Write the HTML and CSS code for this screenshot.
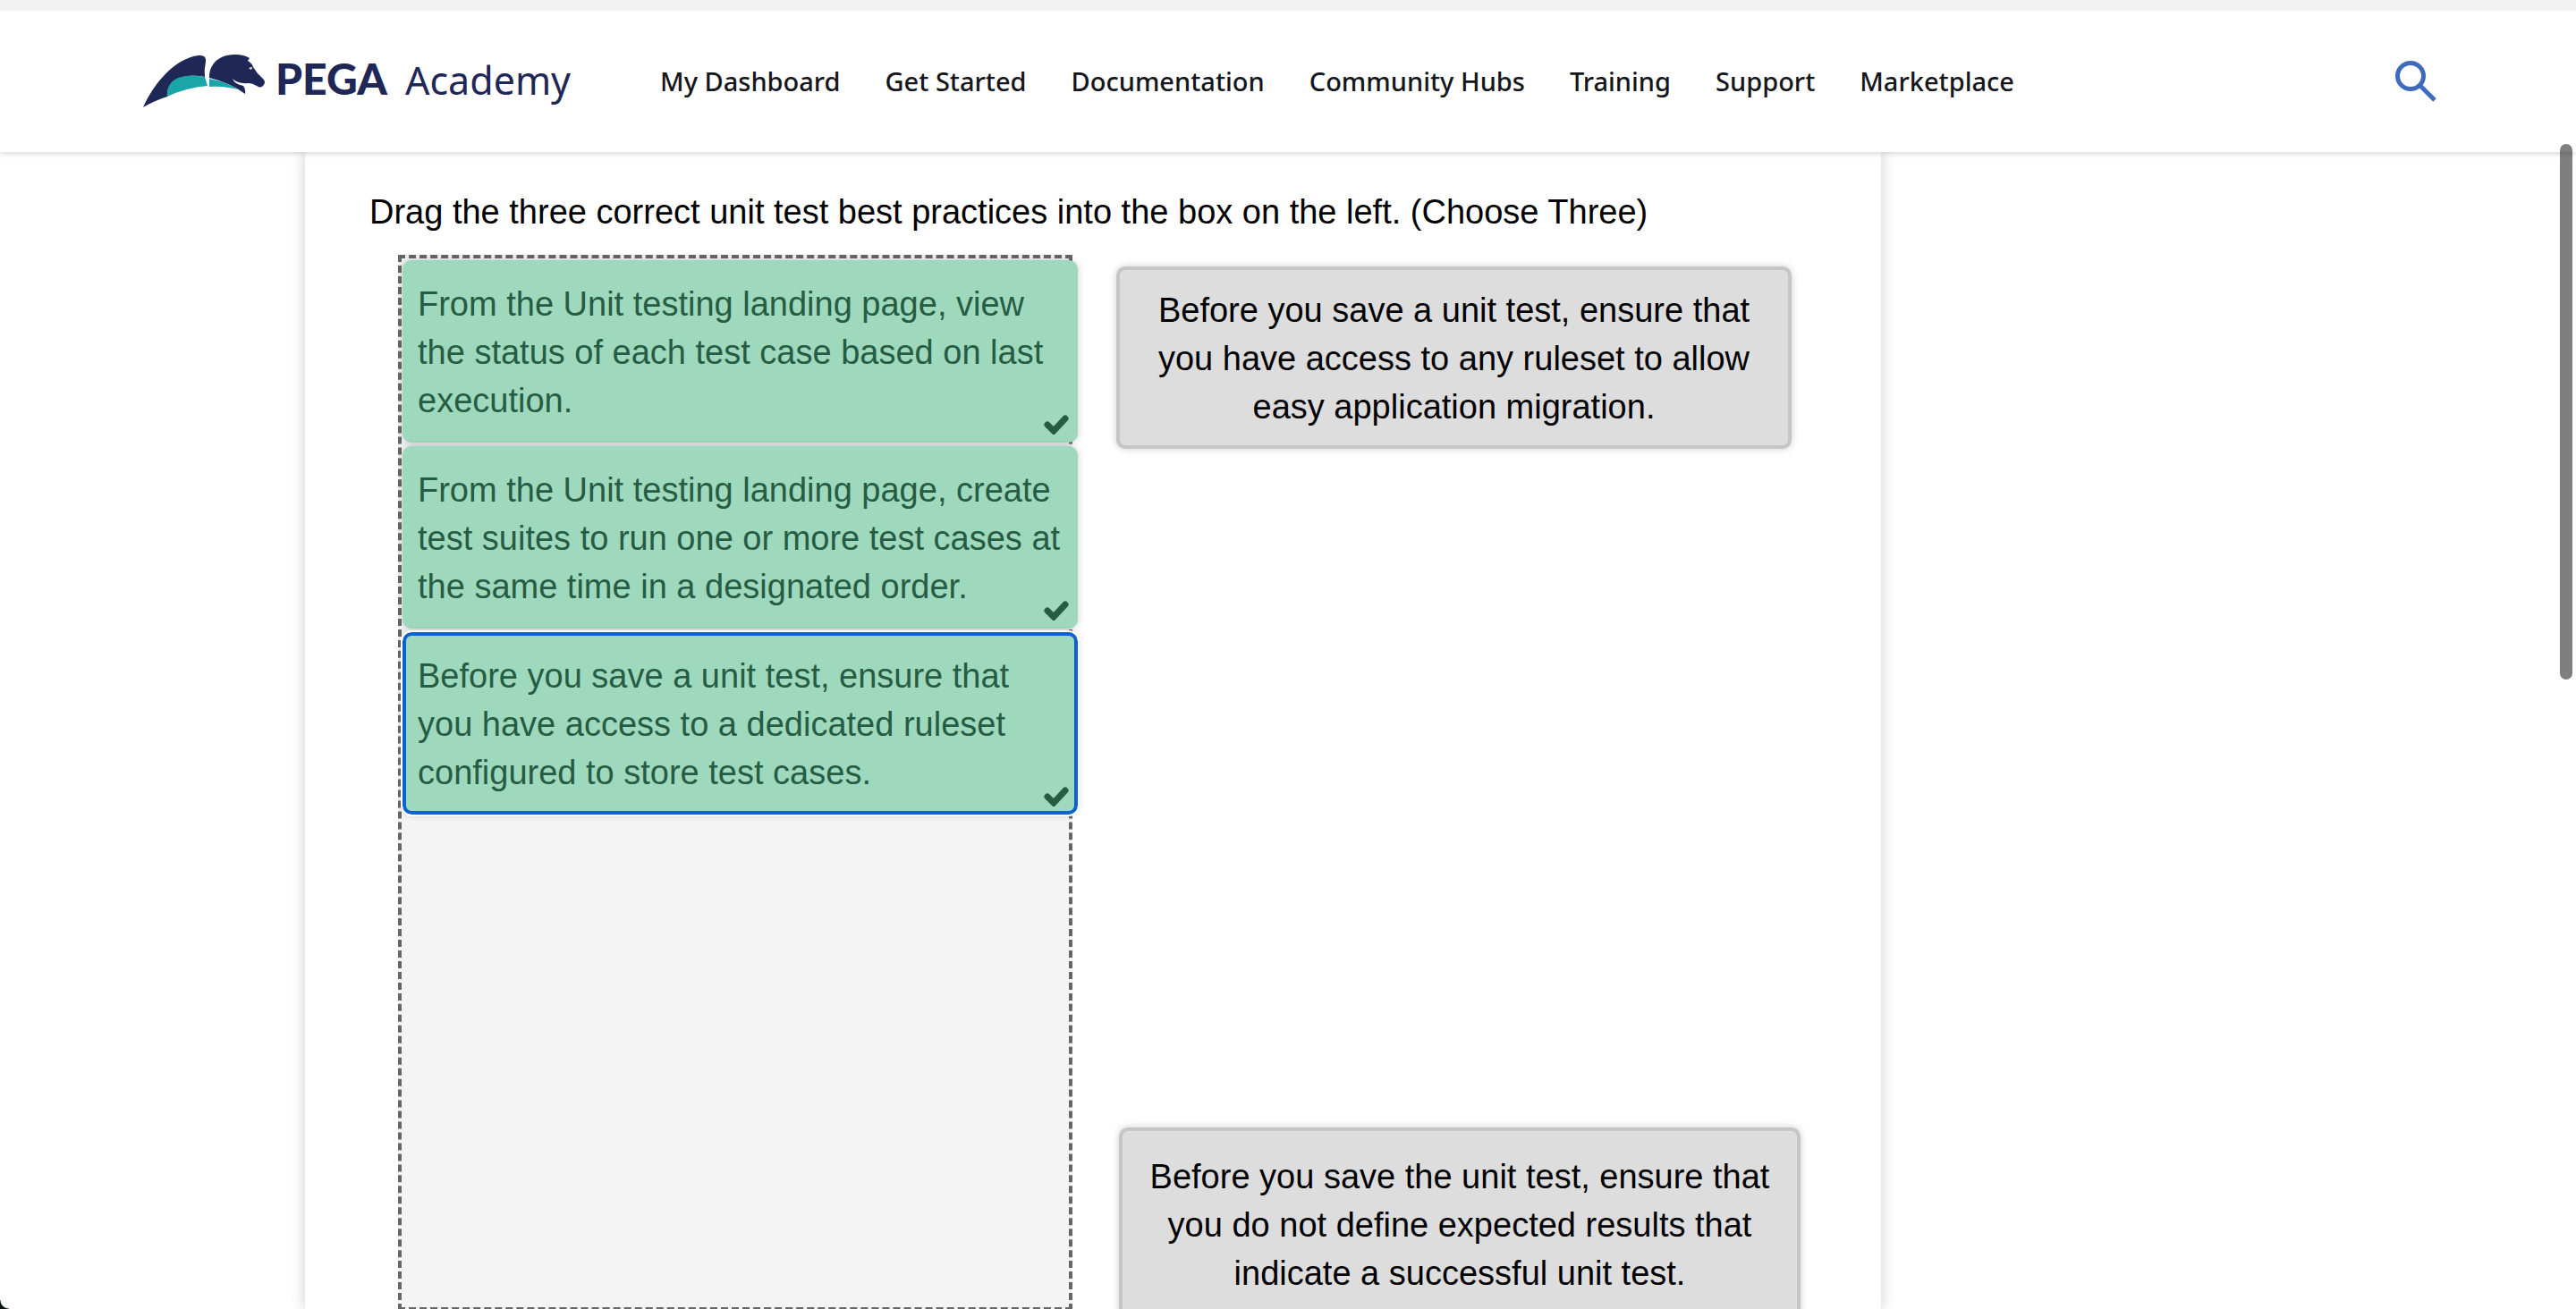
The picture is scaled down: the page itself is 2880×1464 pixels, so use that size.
FILE: index.html
```html
<!DOCTYPE html>
<html lang="en">
<head>
<meta charset="utf-8">
<title>Pega Academy</title>
<meta name="viewport" content="width=device-width, initial-scale=1">
<link rel="stylesheet" href="styles.css">
</head>
<body>
<header class="site-header">
  <a class="brand" href="#" aria-label="Pega Academy">
    <svg class="brand-mark" viewBox="0 0 138 62" width="138" height="62" aria-hidden="true">
      <path fill="#1f2756" d="M0 60C12 33 36 5 62 2Q71 1 70 9Q68 18 69 26C50 22 26 26 27 48Q12 53 0 60Z"/>
      <path fill="#1aa6a8" d="M27 48C26 26 45 22 69 26L72 36Q48 38 27 48Z"/>
      <path fill="#1f2756" d="M74 27C74 9 88 1 103 1Q113 1 119 5L117 8Q122 11 123 15Q127 22 134 28Q138 32 134 36Q131 39 127 36Q122 33 118 33Q105 34 100 28Q102 34 112 36Q115 40 114 45Q96 32 74 27Z"/>
      <path fill="#1aa6a8" d="M74 28Q92 31 106 40Q90 36 74 37Z"/>
      <path fill="#fff" d="M118 16L122 15L121 18Z"/>
    </svg>
    <span class="brand-name"><b class="brand-main">PEGA</b> <span class="brand-sub">Academy</span></span>
  </a>
  <nav class="main-nav" aria-label="Main">
    <a href="#">My Dashboard</a>
    <a href="#">Get Started</a>
    <a href="#">Documentation</a>
    <a href="#">Community Hubs</a>
    <a href="#">Training</a>
    <a href="#">Support</a>
    <a href="#">Marketplace</a>
  </nav>
  <button class="search" type="button" aria-label="Search">
    <svg viewBox="0 0 46 46" width="46" height="46" aria-hidden="true"><circle cx="17" cy="17" r="14.500" fill="none" stroke="#3f6bba" stroke-width="5"/><path d="M27.500 27.500L44 44" stroke="#3f6bba" stroke-width="5"/></svg>
  </button>
</header>
<main class="page">
  <section class="question">
    <h1 class="prompt">Drag the three correct unit test best practices into the box on the left. (Choose Three)</h1>
    <div class="board">
      <div class="drop-zone">
        <button type="button" class="card placed">From the Unit testing landing page, view the status of each test case based on last execution.<svg class="tick" viewBox="0 0 28 22" aria-hidden="true"><path d="M4 11L11 18L24 4" /></svg></button>
        <button type="button" class="card placed">From the Unit testing landing page, create test suites to run one or more test cases at the same time in a designated order.<svg class="tick" viewBox="0 0 28 22" aria-hidden="true"><path d="M4 11L11 18L24 4" /></svg></button>
        <button type="button" class="card placed selected">Before you save a unit test, ensure that you have access to a dedicated ruleset configured to store test cases.<svg class="tick" viewBox="0 0 28 22" aria-hidden="true"><path d="M4 11L11 18L24 4" /></svg></button>
      </div>
      <div class="options">
        <button type="button" class="card option">Before you save a unit test, ensure that you have access to any ruleset to allow easy application migration.</button>
        <button type="button" class="card option option-large">Before you save the unit test, ensure that you do not define expected results that indicate a successful unit test.</button>
      </div>
    </div>
  </section>
</main>
<div class="scroll-thumb" aria-hidden="true"></div>
<div class="window-corner" aria-hidden="true"></div>
</body>
</html>
```

FILE: styles.css
```css
* {
  box-sizing: border-box;
}

html {
  overflow: hidden;
}

body {
  margin: 0;
  height: 100vh;
  display: flex;
  flex-direction: column;
  background: #fff;
  color: #000;
  font-family: "Liberation Sans", Arial, sans-serif;
  font-size: 38px;
  line-height: 54px;
}

/* Header */
.site-header {
  position: relative;
  z-index: 1;
  flex: none;
  display: flex;
  align-items: center;
  height: 170px;
  padding: 0 156px 0 160px;
  border-top: 12px solid #f2f2f2;
  background: #fff;
  box-shadow: 0 2px 6px rgba(0, 0, 0, 0.16);
}

.brand {
  display: flex;
  align-items: center;
  gap: 10px;
  color: #1f2756;
  text-decoration: none;
}

.brand-name {
  display: flex;
  align-items: baseline;
  gap: 20px;
  padding-bottom: 4px;
  white-space: nowrap;
}

.brand-main {
  font-family: Lato, sans-serif;
  font-size: 48px;
  font-weight: 900;
}

.brand-sub {
  font-family: "Noto Sans", sans-serif;
  font-size: 43px;
}

.main-nav {
  display: flex;
  gap: 50px;
  margin-left: 100px;
}

.main-nav a {
  color: #15161b;
  font-family: "Noto Sans", sans-serif;
  font-size: 29px;
  font-weight: 500;
  text-decoration: none;
  white-space: nowrap;
}

.search {
  display: flex;
  margin-left: auto;
  padding: 0;
  border: 0;
  background: none;
}

/* Question */
.page {
  flex: 1;
  display: flex;
  min-height: 0;
  padding-left: 341px;
}

.question {
  flex: none;
  display: flex;
  flex-direction: column;
  width: 69.4%;
  padding: 40px 92px 0 72px;
  box-shadow: 0 0 16px rgba(0, 0, 0, 0.2);
}

.prompt {
  margin: 0 0 21px;
  font-size: 38px;
  font-weight: 400;
  line-height: 54px;
}

.board {
  display: grid;
  grid-template-columns: 754px 765px;
  gap: 49px;
  padding-left: 32px;
}

.drop-zone {
  display: flex;
  flex-direction: column;
  gap: 4px;
  height: 1181px;
  padding: 2px 0 0 1px;
  border: 4px dashed #666;
  background: #f4f4f4;
}

.card {
  position: relative;
  width: 755px;
  height: 204px;
  flex: none;
  border: 4px solid transparent;
  border-radius: 10px;
  box-shadow: 0 0 8px rgba(0, 0, 0, 0.2);
  font: inherit;
}

.placed {
  padding: 2px 14px 0 13px;
  border-color: #9fd9bd;
  background: #9fd9bd;
  color: #265c43;
  text-align: left;
}

.selected {
  border-color: #0d62d0;
  outline: 2px solid #fff;
}

.tick {
  position: absolute;
  right: 6px;
  bottom: 5px;
  width: 28px;
  height: 22px;
  fill: none;
  stroke: #265c43;
  stroke-width: 7;
  stroke-linecap: round;
}

.options {
  display: flex;
  flex-direction: column;
  align-items: flex-start;
  padding-top: 13px;
}

.option {
  padding: 1px 30px 0;
  border-color: #c6c6c6;
  background: #ddd;
  color: #000;
  text-align: center;
}

.option-large {
  width: 762px;
  height: 216px;
  margin: 759px 0 0 3px;
}

/* Window chrome */
.scroll-thumb {
  position: fixed;
  z-index: 2;
  top: 161px;
  right: 4px;
  width: 14px;
  height: 599px;
  border-radius: 7px;
  background: rgba(0, 0, 0, 0.5);
}

.window-corner {
  position: fixed;
  bottom: 0;
  left: 0;
  width: 10px;
  height: 10px;
  background: radial-gradient(circle at 100% 0, transparent 9px, #0b1518 10px);
}
```
